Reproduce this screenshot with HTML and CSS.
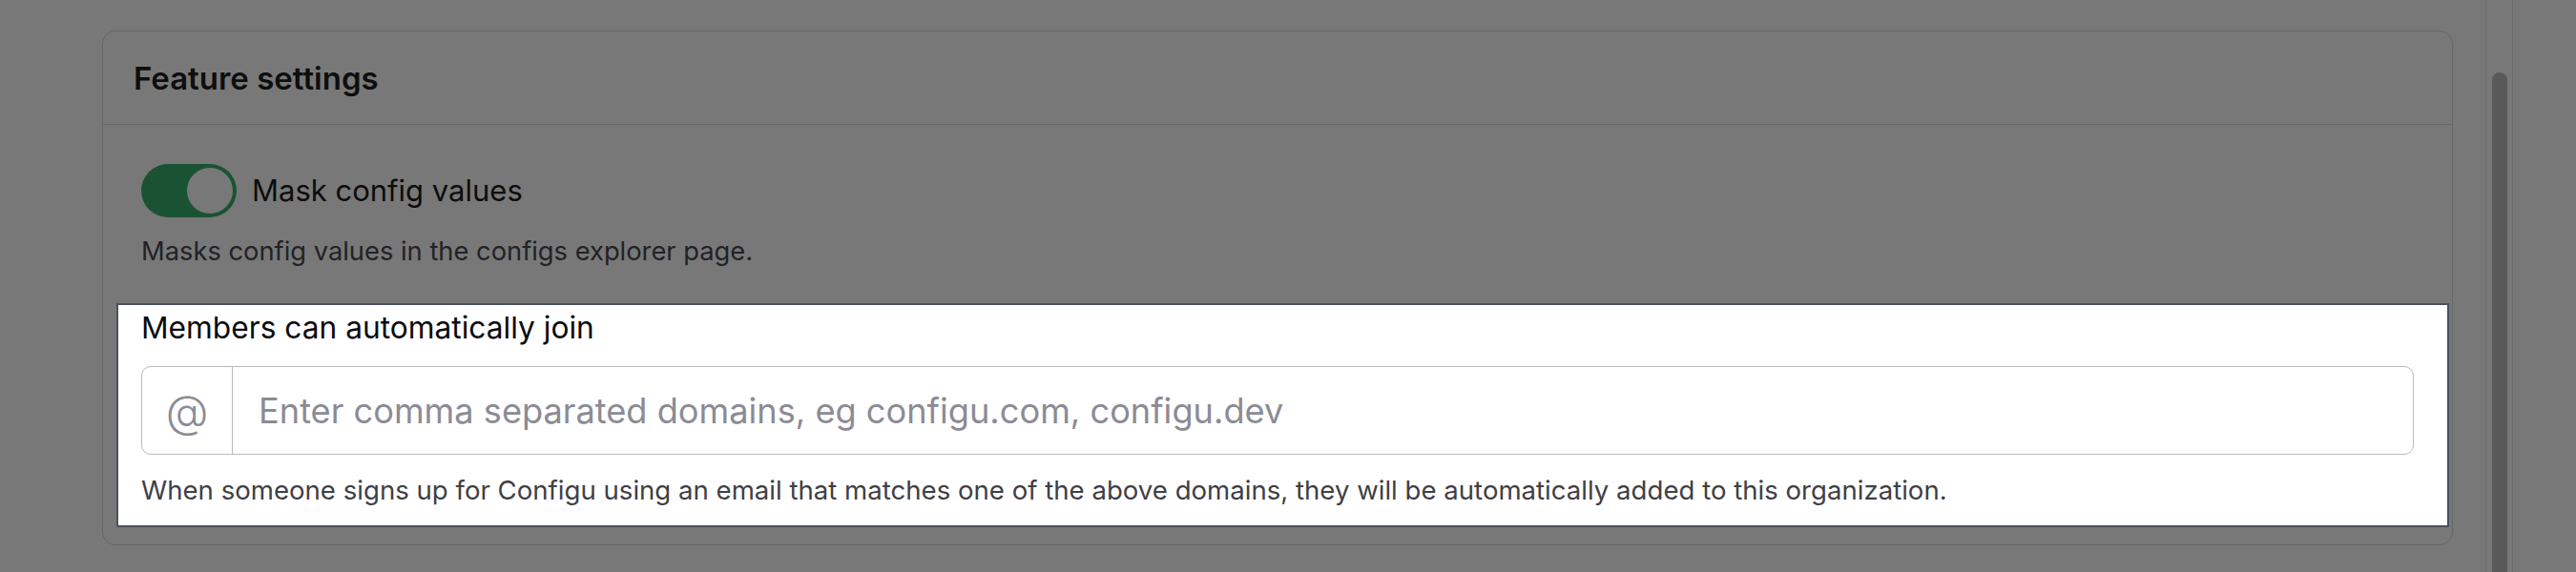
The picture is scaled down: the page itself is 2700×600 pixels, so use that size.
FILE: index.html
```html
<!DOCTYPE html>
<html lang="en">
<head>
<meta charset="utf-8">
<title>Feature settings</title>
<link rel="stylesheet" href="styles.css">
</head>
<body>
<div class="app">
  <main class="main">
    <section class="card">
      <header class="card-header">
        <h2 class="card-title">Feature settings</h2>
      </header>
      <div class="card-body">
        <div class="toggle-row">
          <span class="switch" role="switch" aria-checked="true"><span class="knob"></span></span>
          <span class="toggle-label">Mask config values</span>
        </div>
        <p class="desc">Masks config values in the configs explorer page.</p>
        <div class="spotlight">
          <label class="field-label" for="domains">Members can automatically join</label>
          <div class="input-group">
            <span class="addon">@</span>
            <input class="input" id="domains" type="text" placeholder="Enter comma separated domains, eg configu.com, configu.dev">
          </div>
          <p class="hint">When someone signs up for Configu using an email that matches one of the above domains, they will be automatically added to this organization.</p>
        </div>
      </div>
    </section>
  </main>
  <div class="scroll-track"><div class="scroll-thumb"></div></div>
  <div class="side"></div>
</div>
</body>
</html>
```

FILE: styles.css
```css
html, body {
  margin: 0;
  padding: 0;
  background: #ffffff;
  overflow: hidden;
}

body {
  font-family: Inter, "Noto Sans", sans-serif;
}

.app {
  display: flex;
  height: 600px;
}

.main {
  flex: none;
  width: 2605px;
  box-sizing: border-box;
  padding: 32px 34px 0 107px;
}

.card {
  border: 1px solid #dadada;
  border-radius: 14px;
  background: #ffffff;
}

.card-header {
  height: 97px;
  display: flex;
  align-items: center;
  padding-left: 32px;
  border-bottom: 1px solid #dadada;
}

.card-title {
  margin: 0;
  font-size: 33px;
  font-weight: 600;
  color: #1f1f1f;
}

.card-body {
  padding: 41px 40px 20px 40px;
}

.toggle-row {
  display: flex;
  align-items: center;
  gap: 16px;
}

.switch {
  flex: none;
  width: 100px;
  height: 56px;
  box-sizing: border-box;
  padding: 0 4px;
  border-radius: 28px;
  background: #38b06c;
  display: flex;
  align-items: center;
  justify-content: flex-end;
}

.knob {
  width: 48px;
  height: 48px;
  border-radius: 50%;
  background: #ffffff;
}

.toggle-label {
  font-size: 31px;
  line-height: 1.2;
  color: #1c1c1c;
}

.desc {
  margin: 15px 0 0;
  font-size: 27.3px;
  line-height: 42px;
  color: #4a4a52;
}

.spotlight {
  position: relative;
  z-index: 5;
  margin: 35px -35px 0 -24px;
  padding: 0 35px 16px 24px;
  background: #ffffff;
  box-shadow: 0 0 0 2px #4b505d, 0 0 0 3000px rgba(0, 0, 0, 0.53);
}

.field-label {
  display: block;
  font-size: 31.7px;
  line-height: 48px;
  color: #0b0b0f;
}

.input-group {
  margin-top: 16px;
  height: 93px;
  box-sizing: border-box;
  display: flex;
  border: 1px solid #b9b9c1;
  border-radius: 10px;
}

.addon {
  flex: none;
  width: 94px;
  border-right: 1px solid #b9b9c1;
  display: flex;
  align-items: center;
  justify-content: center;
  font-size: 46px;
  font-weight: 300;
  color: #8b8b95;
}

.input {
  flex: 1;
  min-width: 0;
  border: 0;
  outline: 0;
  padding: 0 0 0 27px;
  background: transparent;
  font-family: inherit;
  font-size: 36.2px;
  color: #1c1c1c;
}

.input::placeholder {
  color: #8b8b95;
}

.hint {
  margin: 16px 0 0;
  font-size: 27.6px;
  line-height: 42px;
  color: #3f3f46;
}

.scroll-track {
  flex: none;
  width: 16px;
  padding: 76px 5px 0 6px;
  border-left: 1px solid #e4e4e4;
  border-right: 1px solid #e4e4e4;
}

.scroll-thumb {
  height: 524px;
  background: #bdbdbd;
  border-radius: 8px 8px 0 0;
}

.side {
  flex: 1;
}
```
